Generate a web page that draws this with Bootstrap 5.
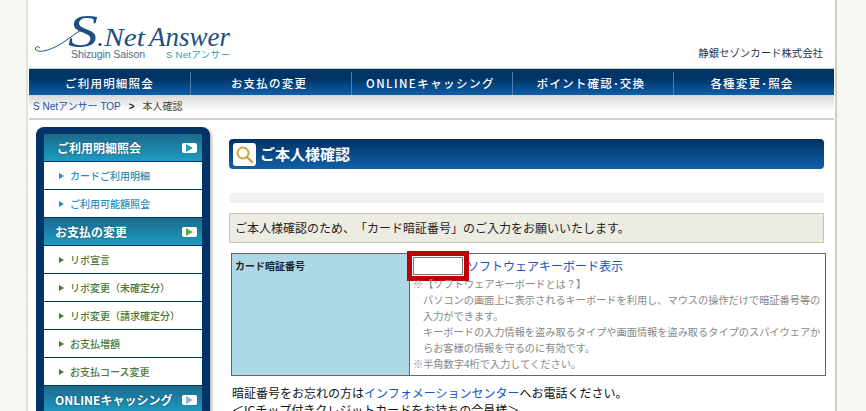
<!DOCTYPE html>
<html lang="ja">
<head>
  <meta charset="UTF-8" />
  <meta name="viewport" content="width=device-width, initial-scale=1.0"/>
  <title>S Netアンサー - 本人確認</title>
  <link href="https://cdn.jsdelivr.net/npm/bootstrap@5.3.3/dist/css/bootstrap.min.css" rel="stylesheet">
  <style>
    html, body { height: 411px; overflow: hidden; }
    body {
      background: #f7f8f2;
      font-family: "Noto Sans CJK JP", "Liberation Sans", sans-serif;
      font-size: 12px;
      color: #222;
      text-spacing-trim: space-all;
    }
    .page-wrap {
      width: 807px;
      margin-left: 28px;
      min-height: 600px;
      background: #fff;
      box-shadow: -2px 0 0 #e2e2da, 2px 0 0 #cfcfc8;
    }
    .site-head { height: 68px; padding: 8px 12px 0 7px; }
    .brand-svg { display: block; }
    .company-name { font-size: 10.4px; color: #1d3557; line-height: 1; padding-bottom: 10px; }
    .main-nav {
      height: 27px;
      margin: 0 1px;
      border-top: 1px solid #ccc;
      background: linear-gradient(#003366 35%, #0f5ea8);
    }
    .main-nav a {
      flex: none;
      width: 161px;
      color: #fff;
      font-size: 11.5px;
      font-weight: 500;
      letter-spacing: 1.2px;
      text-decoration: none;
      border-left: 1px solid #4f7fae;
      height: 23px;
      margin-top: 3px;
      padding-right: 4px;
    }
    .main-nav a:first-child { border-left: 0; padding-right: 0; }
    .main-nav a.wide-item { letter-spacing: 1.45px; padding-right: 3px; }
    .crumb-bar {
      height: 25px;
      margin: 0 1px;
      padding-left: 4px;
      font-family: "Liberation Sans", "Noto Sans CJK JP", sans-serif;
      font-size: 10px;
      background: linear-gradient(#d8d8d8, #fff 70%);
      border-bottom: 2px solid #d0d0d0;
    }
    .crumb-bar a { color: #2255aa; text-decoration: none; }
    .crumb-sep { color: #222; margin: 0 8px; font-weight: 700; }
    .crumb-now { color: #5a3d28; }
    .body-row { padding: 7px 0 0 8px; }
    .side-menu {
      width: 174px;
      flex: none;
      padding: 7px 8px 0;
      background: #003366;
      border-radius: 8px 8px 0 0;
      box-shadow: 2px 2px 3px #bbb;
    }
    .side-head {
      height: 28px;
      padding: 0 5px 0 11px;
      color: #fff;
      font-size: 12px;
      font-weight: 700;
      text-shadow: 0 0 2px #0a4a66;
      background: linear-gradient(#1b6a8b, #1e9cc2);
      border-bottom: 1px solid #003366;
    }
    .side-head.first-head { padding-left: 13px; }
    .head-flag {
      width: 15px;
      height: 10px;
      background: #fff;
      border-radius: 2px;
      flex: none;
    }
    .head-flag::after {
      content: "";
      border-left: 7px solid #1e9cc2;
      border-top: 4px solid transparent;
      border-bottom: 4px solid transparent;
    }
    .head-flag.green-flag::after { border-left-color: #5fae55; }
    .head-flag.blue-flag::after { border-left-color: #8fb4e0; }
    .side-link {
      height: 28px;
      padding-left: 15px;
      gap: 6px;
      font-size: 10px;
      font-weight: 500;
      background: #fff;
      border-bottom: 1px solid #003366;
      text-decoration: none;
      color: #2a8fb5;
    }
    .side-link::before {
      content: "";
      border-left: 5px solid currentColor;
      border-top: 3.5px solid transparent;
      border-bottom: 3.5px solid transparent;
    }
    .side-link.green-link { color: #47793a; }
    .main-col { width: 595px; margin-left: 19px; padding-top: 12px; }
    .title-bar {
      height: 30px;
      padding-left: 4px;
      gap: 4px;
      border-radius: 4px;
      background: linear-gradient(#003366, #1060a8);
      color: #fff;
      font-size: 15px;
      font-weight: 700;
    }
    .lens-box {
      width: 23px;
      height: 23px;
      background: #fff;
      border-radius: 3px;
      flex: none;
    }
    .gray-strip { height: 10px; margin-top: 24px; background: #f1f1f1; }
    .notice-box {
      height: 30px;
      margin-top: 10px;
      padding-left: 5px;
      background: #ecece2;
      border: 1px solid #c8c8a8;
      font-size: 12px;
    }
    .pin-table {
      width: 595px;
      margin: 10px 0 0 2px;
      table-layout: fixed;
      border-collapse: collapse;
    }
    .pin-table td { border: 1px solid #666; padding: 0; vertical-align: top; }
    .pin-label {
      width: 178px;
      background: #add8e6;
      padding: 4px 3px 0 !important;
      font-size: 10px;
      font-weight: 700;
    }
    .pin-field { height: 122px; padding: 3px 0 0 3px !important; }
    .pin-input {
      display: block;
      width: 50px;
      height: 18px;
      flex: none;
      border: 1px solid #777;
      border-radius: 0;
      background: #fff;
      box-shadow: 0 0 0 1px #fff, 0 0 0 6px #c00000;
    }
    .keyboard-link { color: #1155cc; text-decoration: none; margin-left: 4px; font-size: 12px; line-height: 18px; }
    .pin-notes { margin-top: 1px; font-size: 10.2px; line-height: 16px; color: #888; white-space: nowrap; }
    .pin-notes div.indent { padding-left: 10px; }
    .after-table { margin: 8px 0 0 3px; line-height: 17px; font-size: 12px; color: #111; }
    .after-table a { color: #1155cc; text-decoration: none; }
  </style>
</head>
<body>
  <div class="page-wrap">
    <header class="site-head d-flex justify-content-between align-items-start">
      <svg class="brand-svg" width="200" height="57" viewBox="0 -7 200 57">
        <path d="M5 33c-3-3-6 0-4 2 3 3 16 1 32-11 6-4 10-8 16-10" fill="none" stroke="#1d4f80" stroke-width="1"/>
        <text x="33" y="32" font-family="Liberation Serif" font-style="italic" font-size="46" textLength="30" lengthAdjust="spacingAndGlyphs" fill="#1d4f80">S</text>
        <text x="62" y="31" font-family="Liberation Serif" font-style="italic" font-size="25" textLength="48" lengthAdjust="spacingAndGlyphs" fill="#1d4f80">.Net</text>
        <text x="114" y="31" font-family="Liberation Serif" font-style="italic" font-size="27" textLength="81" lengthAdjust="spacingAndGlyphs" fill="#1d4f80">Answer</text>
        <text x="36" y="43" font-family="Liberation Sans" font-size="10.5" fill="#4b6a8c" textLength="74">Shizugin Saison</text>
        <text x="131" y="43" font-family="Liberation Sans, Noto Sans CJK JP" font-size="9.6" fill="#2a9cc0" textLength="64">S Netアンサー</text>
      </svg>
      <div class="company-name align-self-end">静銀セゾンカード株式会社</div>
    </header>

    <nav class="main-nav d-flex">
      <a href="#" class="d-flex align-items-center justify-content-center">ご利用明細照会</a>
      <a href="#" class="d-flex align-items-center justify-content-center">お支払の変更</a>
      <a href="#" class="wide-item d-flex align-items-center justify-content-center">ONLINEキャッシング</a>
      <a href="#" class="d-flex align-items-center justify-content-center">ポイント確認･交換</a>
      <a href="#" class="d-flex align-items-center justify-content-center">各種変更･照会</a>
    </nav>

    <div class="crumb-bar d-flex align-items-center">
      <a href="#">S Netアンサー TOP</a><span class="crumb-sep">&gt;</span><span class="crumb-now">本人確認</span>
    </div>

    <div class="body-row d-flex align-items-start">
      <aside class="side-menu">
        <div class="side-head first-head d-flex align-items-center justify-content-between">ご利用明細照会<span class="head-flag d-flex align-items-center justify-content-center"></span></div>
        <a href="#" class="side-link d-flex align-items-center">カードご利用明細</a>
        <a href="#" class="side-link d-flex align-items-center">ご利用可能額照会</a>
        <div class="side-head d-flex align-items-center justify-content-between">お支払の変更<span class="head-flag green-flag d-flex align-items-center justify-content-center"></span></div>
        <a href="#" class="side-link green-link d-flex align-items-center">リボ宣言</a>
        <a href="#" class="side-link green-link d-flex align-items-center">リボ変更（未確定分）</a>
        <a href="#" class="side-link green-link d-flex align-items-center">リボ変更（請求確定分）</a>
        <a href="#" class="side-link green-link d-flex align-items-center">お支払増額</a>
        <a href="#" class="side-link green-link d-flex align-items-center">お支払コース変更</a>
        <div class="side-head d-flex align-items-center justify-content-between">ONLINEキャッシング<span class="head-flag blue-flag d-flex align-items-center justify-content-center"></span></div>
      </aside>

      <main class="main-col">
        <h1 class="title-bar d-flex align-items-center m-0">
          <span class="lens-box d-flex align-items-center justify-content-center">
            <svg width="19" height="19" viewBox="0 0 19 19"><circle cx="8" cy="8" r="5.5" fill="#fff" stroke="#c9a93a" stroke-width="2"/><path d="M12 12l5 5" stroke="#c9a93a" stroke-width="2.4" stroke-linecap="round"/></svg>
          </span>
          ご本人様確認
        </h1>
        <div class="gray-strip"></div>
        <div class="notice-box d-flex align-items-center">ご本人様確認のため、「カード暗証番号」のご入力をお願いいたします。</div>

        <table class="pin-table">
          <tr>
            <td class="pin-label">カード暗証番号</td>
            <td class="pin-field">
              <div class="d-flex align-items-center">
                <input type="text" class="pin-input" aria-label="カード暗証番号">
                <a href="#" class="keyboard-link">ソフトウェアキーボード表示</a>
              </div>
              <div class="pin-notes">
                <div>※【ソフトウェアキーボードとは？】</div>
                <div class="indent">パソコンの画面上に表示されるキーボードを利用し、マウスの操作だけで暗証番号等の</div>
                <div class="indent">入力ができます。</div>
                <div class="indent">キーボードの入力情報を盗み取るタイプや画面情報を盗み取るタイプのスパイウェアか</div>
                <div class="indent">らお客様の情報を守るのに有効です。</div>
                <div>※半角数字4桁で入力してください。</div>
              </div>
            </td>
          </tr>
        </table>

        <div class="after-table">
          暗証番号をお忘れの方は<a href="#">インフォメーションセンター</a>へお電話ください。<br>
          ＜ICチップ付きクレジットカードをお持ちの会員様＞
        </div>
      </main>
    </div>
  </div>
  <script src="https://cdn.jsdelivr.net/npm/bootstrap@5.3.3/dist/js/bootstrap.bundle.min.js"></script>
</body>
</html>
